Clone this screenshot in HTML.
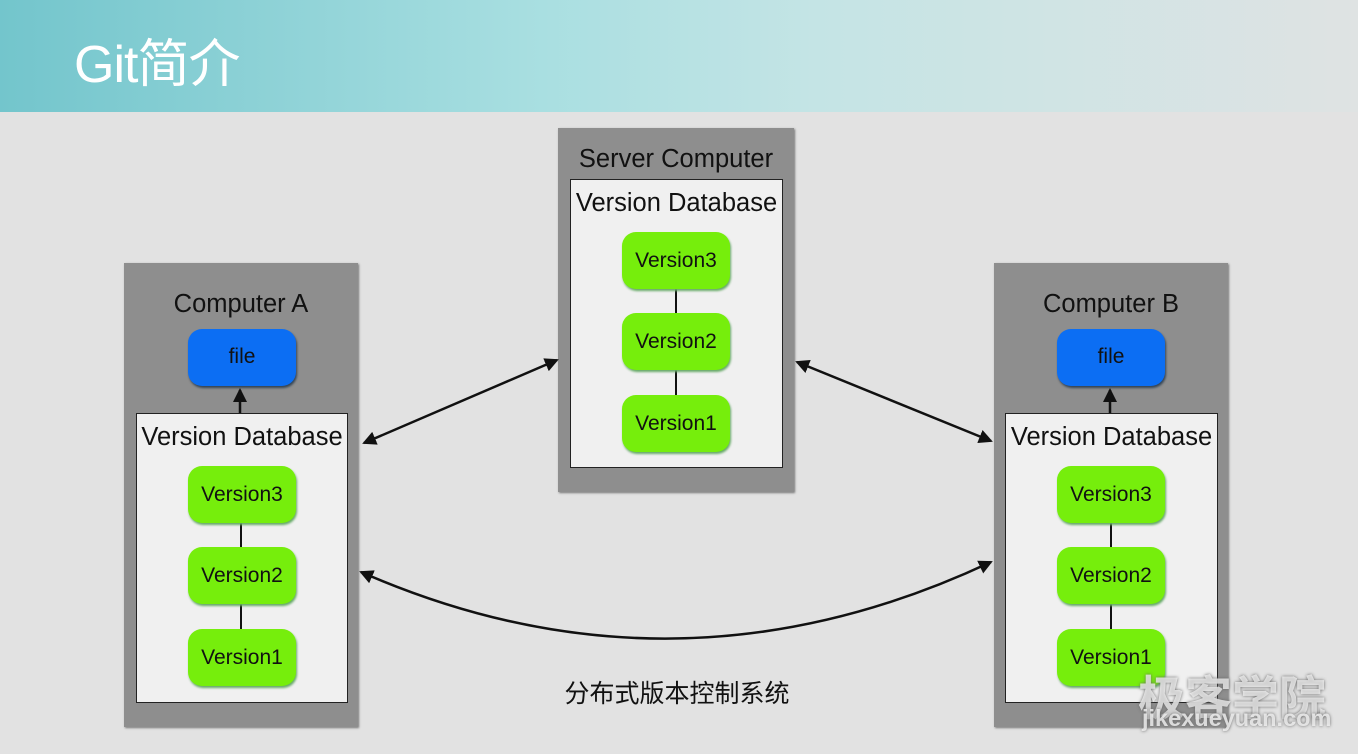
<!DOCTYPE html>
<html><head><meta charset="utf-8"><style>
body{margin:0;width:1358px;height:754px;background:#e2e2e2;position:relative;overflow:hidden;font-family:"Liberation Sans","Noto Sans CJK SC",sans-serif}
.hdr{position:absolute;left:0;top:0;width:1358px;height:112px;background:linear-gradient(90deg,#73c5cc 0%,#a9dfe1 40%,#c4e4e5 60%,#dfe3e3 100%)}
.hdr span{position:absolute;left:74px;top:22px;font-size:52px;color:#fff;font-family:"Liberation Sans","Noto Sans CJK SC",sans-serif;letter-spacing:-1px}
.g{position:absolute;background:#8e8e8e;box-shadow:1px 1px 2px #777}
.w{position:absolute;background:#f0f0f0;border:1px solid #222;box-sizing:border-box}
.t{position:absolute;text-align:center;color:#111;font-size:25.5px;white-space:nowrap}
.v{position:absolute;width:108px;height:57px;border-radius:14px;background:#76ee0c;box-shadow:1px 2px 2px #6a6;text-align:center;line-height:57px;font-size:21px;color:#111}
.f{position:absolute;width:108px;height:57px;border-radius:14px;background:#0c6ef3;box-shadow:1px 2px 2px #345;text-align:center;line-height:55px;font-size:21px;color:#111}
.ln{position:absolute;width:3px;background:#111}
</style></head><body>
<div class="hdr"><span>Git简介</span></div>

<div class="g" style="left:124px;top:263px;width:234px;height:464px"></div>
<div class="t" style="left:124px;top:290px;width:234px">Computer A</div>
<div class="f" style="left:188px;top:329px">file</div>
<div class="w" style="left:136px;top:413px;width:212px;height:290px"></div>
<div class="t" style="left:136px;top:423px;width:212px">Version Database</div>
<div class="ln" style="left:240px;top:520px;height:110px;width:2px"></div>
<div class="v" style="left:188px;top:466px">Version3</div>
<div class="v" style="left:188px;top:547px">Version2</div>
<div class="v" style="left:188px;top:629px">Version1</div>

<div class="g" style="left:558px;top:128px;width:236px;height:364px"></div>
<div class="t" style="left:558px;top:145px;width:236px">Server Computer</div>
<div class="w" style="left:570px;top:179px;width:213px;height:289px"></div>
<div class="t" style="left:570px;top:189px;width:213px">Version Database</div>
<div class="ln" style="left:675px;top:285px;height:115px;width:2px"></div>
<div class="v" style="left:622px;top:232px">Version3</div>
<div class="v" style="left:622px;top:313px">Version2</div>
<div class="v" style="left:622px;top:395px">Version1</div>

<div class="g" style="left:994px;top:263px;width:234px;height:464px"></div>
<div class="t" style="left:994px;top:290px;width:234px">Computer B</div>
<div class="f" style="left:1057px;top:329px">file</div>
<div class="w" style="left:1005px;top:413px;width:213px;height:290px"></div>
<div class="t" style="left:1005px;top:423px;width:213px">Version Database</div>
<div class="ln" style="left:1110px;top:520px;height:110px;width:2px"></div>
<div class="v" style="left:1057px;top:466px">Version3</div>
<div class="v" style="left:1057px;top:547px">Version2</div>
<div class="v" style="left:1057px;top:629px">Version1</div>

<svg style="position:absolute;left:0;top:0" width="1358" height="754">
<defs><marker id="b" markerWidth="14" markerHeight="14" refX="12" refY="7" orient="auto-start-reverse" markerUnits="userSpaceOnUse"><path d="M0,0 L14,7 L0,14 z" fill="#111"/></marker></defs>
<g stroke="#111" stroke-width="2.5" fill="none">
<line x1="240" y1="413" x2="240" y2="390" marker-end="url(#b)"/>
<line x1="1110" y1="413" x2="1110" y2="390" marker-end="url(#b)"/>
<line x1="364" y1="443" x2="557" y2="360" marker-start="url(#b)" marker-end="url(#b)"/>
<line x1="797" y1="362" x2="991" y2="441" marker-start="url(#b)" marker-end="url(#b)"/>
<path d="M361,572 Q676,710 991,562" marker-start="url(#b)" marker-end="url(#b)"/>
</g></svg>
<div class="t" style="left:520px;top:674px;width:314px;font-size:25px">分布式版本控制系统</div>
<div style="position:absolute;left:1138px;top:660px;font-size:47px;font-weight:bold;color:rgba(245,245,245,0.75);text-shadow:0 0 3px #666">极客学院</div>
<div style="position:absolute;left:1142px;top:705px;font-size:23.5px;font-weight:bold;color:rgba(245,245,245,0.8);text-shadow:0 0 3px #666">jikexueyuan.com</div>
</body></html>
